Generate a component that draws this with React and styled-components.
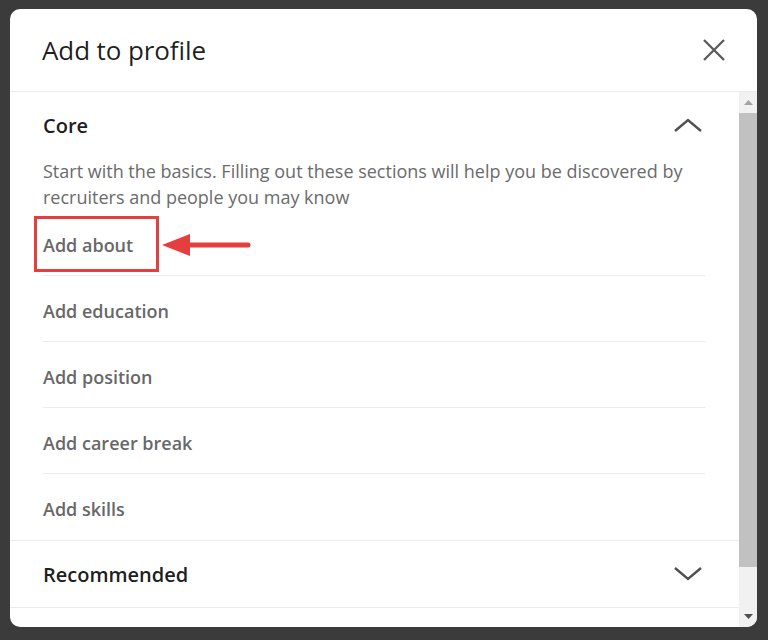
import React from "react";
import styled, { createGlobalStyle } from "styled-components";

const Global = createGlobalStyle`
  html, body { margin: 0; padding: 0; }
  body {
    background: #3b3b3b;
    font-family: "Open Sans", "Noto Sans", Arial, sans-serif;
    width: 768px;
    height: 640px;
    overflow: hidden;
  }
`;

const Page = styled.div`
  padding: 9px 11px 0 10px;
`;

const Modal = styled.div`
  width: 747px;
  height: 618px;
  background: #fff;
  border-radius: 10px;
  overflow: hidden;
  display: flex;
  flex-direction: column;
`;

const Header = styled.header`
  height: 82px;
  flex: none;
  display: flex;
  align-items: center;
  justify-content: space-between;
  padding: 0 30px 0 32px;
  border-bottom: 1px solid #ebebeb;
`;

const Title = styled.h1`
  margin: 0;
  font-size: 26px;
  font-weight: 400;
  color: rgba(0, 0, 0, 0.88);
  letter-spacing: -0.1px;
`;

const IconButton = styled.button`
  border: 0;
  background: none;
  padding: 0;
  display: flex;
  color: #5e5e5e;
`;

const BodyRow = styled.div`
  flex: 1;
  display: flex;
  min-height: 0;
`;

const Content = styled.div`
  flex: 1;
  display: flex;
  flex-direction: column;
`;

const Section = styled.section`
  border-bottom: 1px solid #ebebeb;
`;

const SectionHead = styled.div`
  height: 66px;
  display: flex;
  align-items: center;
  justify-content: space-between;
  padding: 0 36px 0 33px;
`;

const SectionTitle = styled.h2`
  margin: 0;
  font-size: 20px;
  font-weight: 600;
  color: rgba(0, 0, 0, 0.9);
`;

const Desc = styled.p`
  margin: 0 34px 0 33px;
  font-size: 18px;
  line-height: 26px;
  color: #6b6b6b;
`;

const List = styled.ul`
  list-style: none;
  margin: 0 34px 0 33px;
  padding: 0;
`;

const Item = styled.li`
  position: relative;
  padding: 23px 0 ${(p) => (p.$last ? "19px" : "18px")};
  line-height: 24px;
  font-size: 18px;
  font-weight: 600;
  color: #686868;
  border-bottom: ${(p) => (p.$last ? "none" : "1px solid #ebebeb")};
`;

const Highlight = styled.span`
  position: absolute;
  left: -9px;
  top: 6px;
  width: 119px;
  height: 50px;
  border: 3px solid #e53e3e;
`;

const Arrow = styled.svg`
  position: absolute;
  left: 119px;
  top: 22px;
`;

const Scrollbar = styled.div`
  width: 18px;
  flex: none;
  background: #f1f1f1;
  display: flex;
  flex-direction: column;
  align-items: stretch;
`;

const ScrollArrow = styled.div`
  height: 21px;
  display: flex;
  align-items: center;
  justify-content: center;
  flex: none;
`;

const Thumb = styled.div`
  height: 454px;
  background: #c1c1c1;
  flex: none;
`;

const Spacer = styled.div`
  flex: 1;
`;

const Chevron = ({ up }) => (
  <svg width="30" height="16" viewBox="0 0 30 16">
    <path
      d={up ? "M2 14 L15 3 L28 14" : "M2 2 L15 13 L28 2"}
      fill="none"
      stroke="#505050"
      strokeWidth="2.4"
    />
  </svg>
);

const items = [
  "Add about",
  "Add education",
  "Add position",
  "Add career break",
  "Add skills",
];

export default function App() {
  return (
    <>
      <Global />
      <Page>
        <Modal>
          <Header>
            <Title>Add to profile</Title>
            <IconButton aria-label="Close">
              <svg width="26" height="26" viewBox="0 0 26 26">
                <path
                  d="M3 3 L23 23 M23 3 L3 23"
                  stroke="#5a5a5a"
                  strokeWidth="2.3"
                  fill="none"
                />
              </svg>
            </IconButton>
          </Header>
          <BodyRow>
            <Content>
              <Section>
                <SectionHead>
                  <SectionTitle>Core</SectionTitle>
                  <Chevron up />
                </SectionHead>
                <Desc>
                  Start with the basics. Filling out these sections will help
                  you be discovered by recruiters and people you may know
                </Desc>
                <List>
                  {items.map((t, i) => (
                    <Item key={t} $last={i === items.length - 1}>
                      {t}
                      {i === 0 && (
                        <>
                          <Highlight />
                          <Arrow width="92" height="26" viewBox="0 0 92 26">
                            <path d="M0 13 L28 2 L28 24 Z" fill="#e53e3e" />
                            <path
                              d="M26 13 L86 13"
                              stroke="#e53e3e"
                              strokeWidth="5"
                              strokeLinecap="round"
                            />
                          </Arrow>
                        </>
                      )}
                    </Item>
                  ))}
                </List>
              </Section>
              <Section>
                <SectionHead>
                  <SectionTitle>Recommended</SectionTitle>
                  <Chevron />
                </SectionHead>
              </Section>
            </Content>
            <Scrollbar>
              <ScrollArrow>
                <svg width="9" height="5" viewBox="0 0 9 5">
                  <path d="M0 5 L4.5 0 L9 5 Z" fill="#a3a3a3" />
                </svg>
              </ScrollArrow>
              <Thumb />
              <Spacer />
              <ScrollArrow>
                <svg width="9" height="5" viewBox="0 0 9 5">
                  <path d="M0 0 L4.5 5 L9 0 Z" fill="#505050" />
                </svg>
              </ScrollArrow>
            </Scrollbar>
          </BodyRow>
        </Modal>
      </Page>
    </>
  );
}
